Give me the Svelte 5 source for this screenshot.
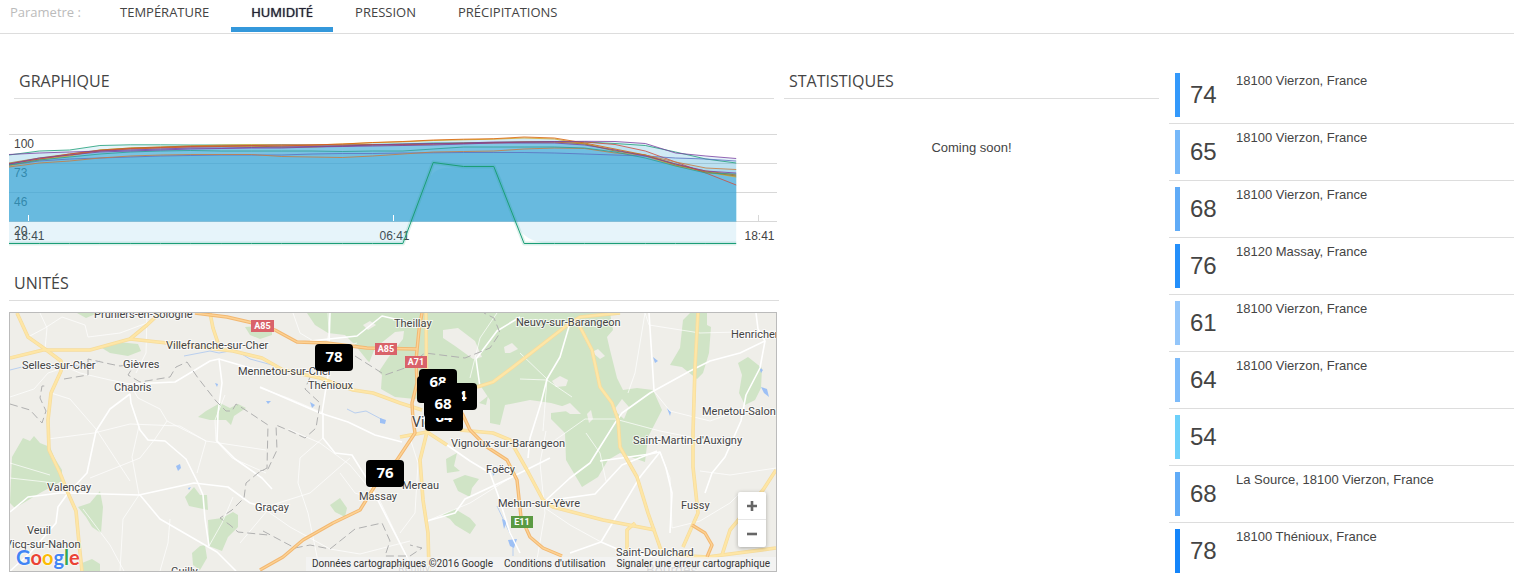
<script lang="ts">
	const tabs = ['Température', 'Humidité', 'Pression', 'Précipitations'];
	let active = $state('Humidité');

	const units = [
		{ value: 74, address: '18100 Vierzon, France', color: '#3399fb' },
		{ value: 65, address: '18100 Vierzon, France', color: '#76b8f9' },
		{ value: 68, address: '18100 Vierzon, France', color: '#60abf7' },
		{ value: 76, address: '18120 Massay, France', color: '#248ffa' },
		{ value: 61, address: '18100 Vierzon, France', color: '#94c6fa' },
		{ value: 64, address: '18100 Vierzon, France', color: '#7dbbfa' },
		{ value: 54, address: '', color: '#6dd0fa' },
		{ value: 68, address: 'La Source, 18100 Vierzon, France', color: '#60abf7' },
		{ value: 78, address: '18100 Thénioux, France', color: '#1485fa' }
	];

	// Chart: one value per hour, 25 points
	const STEP = 30.3;
	const BASE = 91.5;
	const gridLines = [
		{ y: 4.5, label: '100' },
		{ y: 33.5, label: '73' },
		{ y: 62.5, label: '46' },
		{ y: 91.5, label: '20' }
	];
	const ticks = [
		{ x: 19.5, label: '18:41', stroke: '#fff' },
		{ x: 384.5, label: '06:41', stroke: '#fff' },
		{ x: 749.5, label: '18:41', stroke: '#d8d8d8' }
	];
	const series = [
		{ color: '#1b9e77', ys: [25, 21, 20, 15.5, 14.8, 14.8, 15, 15, 15, 14.8, 15, 15, 14.5, 14, 13, 13, 12.5, 12, 11.5, 12, 13.5, 15.5, 22, 29, 33] },
		{ color: '#d9a521', ys: [36, 30, 26, 20, 18, 17, 16, 15, 14.6, 15, 15, 14, 12.7, 11.8, 10.5, 9.8, 9.2, 8, 9, 14, 20, 26, 36, 42, 47] },
		{ color: '#d95f02', ys: [34, 29, 25, 21, 19, 18, 17, 16.5, 16, 16, 15, 14, 12.5, 11.5, 10, 9.2, 8.7, 7, 8, 13, 19, 25, 35, 41, 45] },
		{ color: '#a6761d', ys: [33, 28, 24, 20, 18, 17, 16, 16, 16, 17, 17, 16, 15, 15, 14, 13, 12.5, 12, 12, 14, 21, 25, 34, 42, 46] },
		{ color: '#d14a3a', ys: [34, 29, 24, 20.5, 18.5, 17.5, 16.5, 16, 15.5, 15, 15, 15, 14.5, 14.5, 14, 13.5, 13, 12, 12, 12, 14.5, 21, 32, 43, 55] },
		{ color: '#7b3fa0', ys: [24.5, 23, 22, 21, 20, 19, 18, 18, 17.5, 17, 16.5, 16, 15, 14, 13.5, 13, 12, 12, 11.5, 11.3, 11.5, 13.5, 23, 26, 28.5] },
		{ color: '#5b6fc0', ys: [35, 31, 29, 28, 27, 26, 25.5, 25, 25, 25, 24, 23.5, 23.5, 23, 22.8, 22.5, 22.5, 22.5, 23, 24, 25, 26, 28, 29, 31] },
		{ color: '#cc7a3a', ys: [37, 33, 31, 28, 26, 25, 24.5, 24.5, 24.5, 26.5, 27, 27.5, 26, 24, 22, 21.5, 21, 19, 18, 18.5, 23, 25, 32, 38, 39.5] },
		{ color: '#2a9d92', ys: [35, 30, 27, 24, 22, 21, 20.5, 21, 21, 21, 21, 21.5, 21, 21, 19, 17, 17, 17, 17, 18, 22, 28, 36, 43, 44] },
		{ color: '#7b3fa0', ys: [34, 28, 25, 22, 21, 20, 19, 18.5, 18, 18, 17, 16.5, 16, 15.5, 15, 14, 13, 13, 13, 15, 20, 26, 34, 41, 43] }
	];
	const isolated = { color: '#1b9e77', ys: Array.from({ length: 25 }, (_, i) => (i === 14 ? 32.5 : i === 15 || i === 16 ? 36.5 : 113.5)) };

	function line(ys: number[]) {
		return ys.map((y, i) => `${i ? 'L' : 'M'}${(i * STEP).toFixed(1)} ${y}`).join('');
	}

	function area(ys: number[]) {
		return `${line(ys)}V${BASE}H0Z`;
	}

	// Map layers
	const forests = [
		'M92 35L108 29 128 31 131 38 118 43 100 40Z',
		'M2 144L13 125 20 128 24 123 30 130 40 134 44 144 52 157 52 168 30 180 5 195 0 190Z',
		'M68 194L80 190 90 178 93 194 91 220 82 214 76 204Z',
		'M188 104L196 98 210 90 220 95 228 91 236 95 224 103 221 112 216 107 200 107Z',
		'M175 184L184 174 190 182 197 182 198 197 179 193Z',
		'M198 207L212 205 223 199 228 202 228 214 218 224 212 238 199 233Z',
		'M182 240L190 233 195 232 197 245 190 257 183 252Z',
		'M72 250L82 246 90 251 90 258 73 258Z',
		'M67 0L88 0 76 5Z',
		'M235 14L262 12 262 22 250 26 240 22Z',
		'M297 0L305 12 318 20 335 22 345 32 357 47 372 62 371 76 385 84 405 86 440 76 470 72 480 87 480 110 490 112 495 92 520 87 541 90 566 97 541 100 541 106 555 120 556 147 572 174 588 164 598 147 610 140 635 149 638 124 652 97 643 77 627 75 613 77 607 65 600 37 597 24 603 17 600 0Z',
		'M673 7L680 0 697 0 697 12 701 14 699 40 693 60 687 66 672 54 660 52 670 35Z',
		'M728 50L738 44 752 55 751 75 745 87 735 92 729 80 732 62Z',
		'M436 146L447 140 444 153 450 158 437 160Z',
		'M443 167L455 162 469 166 462 175 460 184 448 178Z',
		'M432 202L445 196 460 205 466 212 460 221 445 212 440 206Z',
		'M320 192L330 185 337 195 335 204 325 199Z',
		'M469 90L478 83 476 92Z'
	];
	const clearings = [
		'M433 17L448 15 465 28 472 44 463 46 445 33 433 25Z',
		'M494 34L502 30 508 36 500 40 495 40Z',
		'M355 60L365 35 385 19 394 18 393 26 378 45 368 60Z',
		'M353 12L360 8 366 12 358 17Z',
		'M542 68L550 63 558 67 556 73 546 74Z',
		'M550 94L560 90 571 101 560 101Z',
		'M582 39L588 36 595 43 590 46Z',
		'M604 97L612 86 619 94 614 106Z',
		'M577 101L581 97 583 106 579 110Z'
	];
	const minorRoads = [
		'M0 84L24 76 38 60 56 54 70 60 100 67 120 71',
		'M18 24L35 15 52 4',
		'M35 36L37 15 30 0',
		'M41 80L60 86 86 116 120 168',
		'M38 126L84 120 120 111 170 113 196 128 256 137',
		'M0 150L40 162',
		'M0 165L45 170',
		'M73 196L100 232 114 258',
		'M129 182L113 206 110 258',
		'M129 113L122 144 129 182',
		'M120 71L128 85 150 96 157 108 196 128 187 160',
		'M157 108L145 126 130 145 80 165',
		'M223 184L212 210 199 233',
		'M160 206L158 230 150 258',
		'M215 82L205 107 206 128 222 145 256 160',
		'M52 4L75 12 78 24 110 20 137 10',
		'M137 0L136 40 126 60',
		'M278 116L310 130 340 152 370 188 395 240',
		'M250 75L278 85 313 100',
		'M313 125L290 145 288 170 298 200 310 258',
		'M340 145L300 180 262 192 230 230',
		'M370 188L345 180 330 160',
		'M250 193L280 214 320 236 350 241 400 228',
		'M318 0L319 20 310 60 312 75',
		'M347 30L320 38 290 20 283 0',
		'M400 125L408 150 405 200 390 220',
		'M417 208L460 190 500 165',
		'M487 0L470 25 460 65',
		'M510 40L537 66 533 118',
		'M562 84L537 67 510 66',
		'M541 130L575 106 605 106',
		'M605 106L650 118 690 126',
		'M639 12L635 0 625 60 618 80',
		'M639 12L690 20 766 18',
		'M643 77L660 98 700 108 725 99',
		'M690 158L720 162 766 155',
		'M650 139L660 165 662 215',
		'M576 120L590 140 596 168',
		'M591 229L560 212 535 195',
		'M662 215L690 208 720 190 730 180',
		'M525 258L535 200 530 150 536 118'
	];
	const localRoads = [
		'M0 199L18 184 50 180 58 180 48 194 46 210 20 240 0 258',
		'M58 180L130 182 150 206 207 239 226 258',
		'M58 180L77 160 86 118 100 96 120 81 121 90 130 117 138 127 155 128 176 146 187 168 193 182 195 206 199 233',
		'M129 182L184 170 218 174 240 190 262 196',
		'M120 71L165 69 200 48 209 46 212 70 208 100 207 128 225 146 252 165 262 176',
		'M209 46L240 55 262 58',
		'M250 74L273 84 310 100 338 109 365 122 392 129',
		'M313 100L313 125 325 140 342 142 357 166 400 250',
		'M312 100L318 62 320 0',
		'M300 28L347 23 372 3 398 9',
		'M437 132L460 148 480 160 488 182 500 220 510 240',
		'M417 208L445 200 455 186 500 165 540 145',
		'M560 10L550 44 537 66 531 90 520 125 518 145',
		'M535 188L560 165 580 150 605 110 612 100 640 80 680 58 700 48 730 40 755 28 748 16 746 0',
		'M639 0L644 77',
		'M755 28L750 55 736 82 731 108 715 144 702 160 695 180',
		'M590 148L640 141 650 139 656 155 662 180 660 220',
		'M650 139L630 164 591 229 560 240',
		'M535 188L585 181 612 152 647 138',
		'M591 229L612 238 650 245',
		'M470 74L466 46 487 18 510 4'
	];
	const yellowRoads = [
		'M7 0L18 24 35 36 51 48 51 58 41 80 38 107 39 137 50 160 58 180 66 198 69 230 72 258',
		'M0 45L33 37 80 37 120 26 157 30 223 38 252 45 273 57 310 65 343 77 363 80 390 90 412 97',
		'M120 26L137 12 150 0',
		'M200 0L203 15 208 30',
		'M416 0L417 119 410 147 413 187 418 220 419 258',
		'M390 124L417 119 437 132',
		'M467 74L483 69 503 54 560 10 570 4 610 0',
		'M567 8L582 37 590 74 602 90 608 107 610 134 627 164 638 200 652 240',
		'M688 0L685 54 683 120 683 154 688 200 673 234',
		'M450 117L483 120 500 127 517 157 533 187 543 194 593 207 645 217',
		'M617 238L617 217 625 210',
		'M766 157L753 177 720 217 712 242',
		'M665 242L697 244 766 235'
	];
	const motorways = [
		'M185 0L217 4 243 10 265 17 287 29 317 30 357 35 407 36',
		'M412 0L409 17 406 47 407 70 402 90 403 107 405 120 387 147 373 160 350 197 323 210 293 227 273 244 250 257',
		'M452 100L460 117 477 134 497 147 507 167 511 204 520 224 533 235 552 243',
		'M682 212L695 220 702 232 697 244'
	];
	const boundaries = [
		'M0 91L20 97 32 110 36 98 30 85 32 73 38 73',
		'M54 66L78 62 78 46 100 51 110 53 125 51 118 62 130 69 160 64 166 54 177 49 188 65 206 88 216 98 222 98 226 91 240 100 258 112 257 155 248 160 236 170 234 185 222 197 210 205 220 212 228 219 258 222',
		'M345 43L375 62 395 55 415 40 455 45 480 35 490 20 484 5 474 0',
		'M300 64L295 76 310 90 306 115 295 125 280 118 266 112 267 137 258 156 250 158',
		'M253 218L285 235 300 232 320 236 345 216 372 210 380 228 375 243 400 243 412 235 400 232'
	];
	const rivers = [
		'M0 57L20 52 45 54 78 52 90 48',
		'M174 43L200 38 209 40 225 37 240 46 262 52',
		'M337 96L345 100 356 98 373 107',
		'M487 193L495 210 503 227 503 243'
	];
	const lakes = [
		'M166 153L170 151 171 155 168 158Z', 'M205 70L208 71 207 74Z', 'M178 175L181 174 179 177Z',
		'M300 89L305 92 302 95Z', 'M370 105L376 107 375 111 370 110Z', 'M256 88L261 88 258 91Z',
		'M643 44L648 48 645 50Z', 'M751 74L757 76 759 84 754 80Z', 'M749 54L753 57 751 60Z',
		'M657 95L661 99 660 103Z', 'M498 227L507 226 504 235 500 233Z', 'M492 206L497 208 494 216Z', 'M482 156L486 159 483 163Z'
	];
	const towns = [
		{ x: 84, y: 5, name: 'Pruniers-en-Sologne' },
		{ x: 156, y: 36, name: 'Villefranche-sur-Cher' },
		{ x: 12, y: 56, name: 'Selles-sur-Cher' },
		{ x: 113, y: 55, name: 'Gièvres' },
		{ x: 104, y: 78, name: 'Chabris' },
		{ x: 228, y: 62, name: 'Mennetou-sur-Cher' },
		{ x: 298, y: 76, name: 'Thénioux' },
		{ x: 384, y: 14, name: 'Theillay' },
		{ x: 506, y: 13, name: 'Neuvy-sur-Barangeon' },
		{ x: 721, y: 25, name: 'Henrichemont' },
		{ x: 692, y: 102, name: 'Menetou-Salon' },
		{ x: 623, y: 131, name: "Saint-Martin-d'Auxigny" },
		{ x: 441, y: 134, name: 'Vignoux-sur-Barangeon' },
		{ x: 476, y: 160, name: 'Foëcy' },
		{ x: 392, y: 176, name: 'Mereau' },
		{ x: 349, y: 187, name: 'Massay' },
		{ x: 245, y: 198, name: 'Graçay' },
		{ x: 37, y: 178, name: 'Valençay' },
		{ x: 17, y: 221, name: 'Veuil' },
		{ x: -5, y: 235, name: 'Vicq-sur-Nahon' },
		{ x: 161, y: 262, name: 'Guilly' },
		{ x: 488, y: 194, name: 'Mehun-sur-Yèvre' },
		{ x: 671, y: 196, name: 'Fussy' },
		{ x: 606, y: 243, name: 'Saint-Doulchard' }
	];
	const shields = [
		{ x: 241, y: 7, w: 23, label: 'A85', fill: '#d9626a' },
		{ x: 365, y: 30, w: 22, label: 'A85', fill: '#d9626a' },
		{ x: 395, y: 43, w: 22, label: 'A71', fill: '#d9626a' },
		{ x: 501, y: 203, w: 22, label: 'E11', fill: '#5b9a43' }
	];
	const pins = [
		{ x: 305, y: 31, value: 78 },
		{ x: 356, y: 147, value: 76 },
		{ x: 407, y: 63, value: 65 },
		{ x: 409, y: 56, value: 68 },
		{ x: 429, y: 70, value: 74 },
		{ x: 415, y: 91, value: 64 },
		{ x: 414, y: 78, value: 68 }
	];
</script>

<nav class="params">
	<span class="params-label">Parametre :</span>
	{#each tabs as tab}
		<button class="tab" class:active={tab === active} onclick={() => (active = tab)}>{tab}</button>
	{/each}
</nav>

<main class="dashboard">
	<div class="left">
		<section>
			<h2 class="title inset">Graphique</h2>
			<svg class="chart" viewBox="0 0 768 118" role="img" aria-label="Graphique humidité">
				{#each gridLines as g}
					<line x1="0" x2="768" y1={g.y} y2={g.y} stroke="#d8d8d8" />
					<text x="5" y={g.y + 13}>{g.label}</text>
				{/each}
				{#each ticks as t}
					<text x={t.x + 1} y="110" text-anchor="middle">{t.label}</text>
				{/each}
				<g fill="#2ea5d6" fill-opacity="0.12">
					{#each series as s}
						<path d={area(s.ys)} />
					{/each}
					<path d="M0 91.5H401L418 52Q424 39 436 38L480 36Q488 39 492 48L505 91.5H727.2V113.5H540Q524 113 514 104 509 99 505 91.5H401L393.9 113.5H0Z" />
				</g>
				<g fill="none" stroke-linejoin="round">
					{#each series as s}
						<path d={line(s.ys)} stroke={s.color} stroke-opacity="0.8" />
					{/each}
					<path d={line(isolated.ys)} stroke="#1b9e77" stroke-opacity="0.15" stroke-width="4" />
					<path d={line(isolated.ys)} stroke={isolated.color} />
				</g>
				{#each ticks as t}
					<line x1={t.x} x2={t.x} y1="85" y2="91" stroke={t.stroke} />
				{/each}
			</svg>
		</section>

		<section>
			<h2 class="title units-title">Unités</h2>
			<div class="map">
				<svg class="map-canvas" viewBox="0 0 766 258" preserveAspectRatio="xMidYMid slice">
					<rect width="766" height="258" fill="#efeee9" />
					<g fill="#d0e4c6">
						{#each forests as d}<path {d} />{/each}
					</g>
					<g fill="#efeee9">
						{#each clearings as d}<path {d} />{/each}
					</g>
					<g fill="none" stroke="#b9cfef">
						{#each rivers as d}<path {d} />{/each}
					</g>
					<g fill="#9dc0f5">
						{#each lakes as d}<path {d} />{/each}
					</g>
					<g fill="none" stroke="#fff" stroke-linejoin="round">
						<g stroke-opacity="0.7">
							{#each minorRoads as d}<path {d} />{/each}
						</g>
						<g stroke-width="1.6">
							{#each localRoads as d}<path {d} />{/each}
						</g>
					</g>
					<g fill="none" stroke="#b0b0b0" stroke-dasharray="8 4">
						{#each boundaries as d}<path {d} />{/each}
					</g>
					<g fill="none" stroke-linejoin="round">
						{#each yellowRoads as d}<path {d} stroke="#f6dc9c" stroke-width="3.6" />{/each}
						{#each yellowRoads as d}<path {d} stroke="#fee6a6" stroke-width="2.2" />{/each}
						{#each motorways as d}<path {d} stroke="#f2b872" stroke-width="3.4" />{/each}
						{#each motorways as d}<path {d} stroke="#fdd294" stroke-width="1.4" />{/each}
					</g>
					{#each shields as s}
						<rect x={s.x} y={s.y} width={s.w} height="12" fill={s.fill} />
						<text class="shield" x={s.x + s.w / 2} y={s.y + 9} text-anchor="middle">{s.label}</text>
					{/each}
					{#each towns as t}
						<text class="town" x={t.x} y={t.y}>{t.name}</text>
					{/each}
					<text class="town city" x="402" y="114">Vierzon</text>
					<text class="town faded" x="388" y="259">Reuilly</text>
					<text class="town city faded" x="636" y="262">Bourges</text>
					{#each pins as p}
						<g class="pin">
							<rect x={p.x} y={p.y} width="38" height="27" rx="4" />
							<text x={p.x + 19} y={p.y + 18} text-anchor="middle">{p.value}</text>
						</g>
					{/each}
				</svg>
				<a class="logo" href="#google" aria-label="Google">
					<span class="b">G</span><span class="r">o</span><span class="y">o</span><span class="b">g</span><span class="g">l</span><span class="r">e</span>
				</a>
				<div class="zoom">
					<button aria-label="Zoom avant">
						<svg viewBox="0 0 10 10"><path d="M0 5H10M5 0V10" /></svg>
					</button>
					<button aria-label="Zoom arrière">
						<svg viewBox="0 0 10 10"><path d="M0 5H10" /></svg>
					</button>
				</div>
				<div class="credits">
					<span>Données cartographiques ©2016 Google</span>
					<a href="#conditions">Conditions d'utilisation</a>
					<a href="#erreur">Signaler une erreur cartographique</a>
				</div>
			</div>
		</section>
	</div>

	<section class="stats">
		<h2 class="title">Statistiques</h2>
		<p class="soon">Coming soon!</p>
	</section>

	<ul class="unit-list">
		{#each units as unit}
			<li class="unit">
				<span class="bar" style="background: {unit.color}"></span>
				<span class="value">{unit.value}</span>
				<span class="address">{unit.address}</span>
			</li>
		{/each}
	</ul>
</main>

<style>
	:global(body) {
		margin: 0;
		background: #fff;
		color: #444;
		font-family: 'Liberation Sans', Arial, sans-serif;
		font-size: 13px;
	}

	.params {
		display: flex;
		align-items: stretch;
		gap: 2px;
		padding: 0 10px 1px;
		border-bottom: 1px solid #ddd;
		font-family: 'Open Sans', sans-serif;
		font-size: 13px;
		line-height: 24px;
	}

	.params-label {
		width: 88px;
		color: #bbb;
	}

	.tab {
		padding: 0 20px 3px;
		border: none;
		border-bottom: 5px solid transparent;
		background: none;
		color: #444;
		font: inherit;
		text-transform: uppercase;
		cursor: pointer;
	}

	.tab.active {
		border-bottom-color: #3498db;
		color: #223;
		text-shadow: 0 0 1px #223;
	}

	.dashboard {
		display: grid;
		grid-template-columns: 784fr 385fr 345fr;
	}

	.left {
		padding: 35px 5px 0 9px;
	}

	.title {
		margin: 0;
		padding: 0 5px 5px;
		border-bottom: 1px solid #ddd;
		font-family: 'Open Sans', sans-serif;
		font-size: 16px;
		font-weight: 400;
		line-height: 24px;
		text-transform: uppercase;
	}

	.inset {
		margin: 0 5px;
	}

	.units-title {
		margin-top: 23px;
	}

	/* Chart */
	.chart {
		display: block;
		width: calc(100% - 2px);
		margin-top: 31px;
	}

	.chart text {
		fill: #444;
		font-size: 12px;
	}

	/* Map */
	.map {
		position: relative;
		margin: 11px 2px 0 0;
		border: 1px solid #bbb;
		overflow: hidden;
	}

	.map-canvas {
		display: block;
		width: 100%;
	}

	.town {
		fill: #444;
		stroke: #fff;
		stroke-opacity: 0.7;
		stroke-width: 2px;
		paint-order: stroke;
		font-family: Roboto, sans-serif;
		font-size: 11px;
	}

	.city {
		font-size: 14px;
	}

	.faded {
		fill: #999;
	}

	.shield {
		fill: #fff;
		font-family: Roboto, sans-serif;
		font-size: 9px;
		font-weight: 700;
	}

	.pin text {
		fill: #fff;
		font-family: 'Open Sans', sans-serif;
		font-size: 15px;
		font-weight: 700;
	}

	.logo {
		position: absolute;
		left: 6px;
		bottom: 1px;
		display: flex;
		font-family: Lato, sans-serif;
		font-size: 20px;
		font-weight: 700;
		line-height: 26px;
		text-decoration: none;
		text-shadow: 0 0 2px #fff, 0 0 2px #fff;
	}

	.b { color: #4285f4; }
	.r { color: #ea4335; }
	.y { color: #fbbc05; }
	.g { color: #34a853; }

	.zoom {
		position: absolute;
		right: 10px;
		bottom: 24px;
		width: 28px;
		border-radius: 2px;
		background: #fff;
		box-shadow: 0 1px 4px rgba(0, 0, 0, 0.3);
	}

	.zoom button {
		display: flex;
		align-items: center;
		justify-content: center;
		width: 28px;
		height: 27px;
		padding: 0;
		border: none;
		background: none;
		cursor: pointer;
	}

	.zoom button + button {
		height: 28px;
		border-top: 1px solid #e6e6e6;
	}

	.zoom svg {
		width: 10px;
		height: 10px;
		stroke: #666;
		stroke-width: 2.6;
	}

	.credits {
		position: absolute;
		right: 0;
		bottom: 0;
		display: flex;
		gap: 11px;
		padding: 0 6px;
		background: rgba(245, 245, 245, 0.7);
		color: #333;
		font-family: Roboto, sans-serif;
		font-size: 10px;
		line-height: 14px;
		white-space: nowrap;
	}

	.credits a {
		color: inherit;
		text-decoration: none;
	}

	/* Statistics */
	.stats {
		padding: 35px 10px 0 0;
	}

	.soon {
		margin: 41px 0 0;
		line-height: 16px;
		text-align: center;
	}

	/* Unit list */
	.unit-list {
		margin: 0;
		padding: 33px 0 0;
		list-style: none;
	}

	.unit {
		display: flex;
		align-items: center;
		padding: 6px;
		border-bottom: 1px solid #ddd;
	}

	.unit:last-child {
		border-bottom: none;
	}

	.bar {
		width: 5px;
		height: 44px;
	}

	.value {
		width: 46px;
		padding-left: 10px;
		font-size: 24px;
	}

	.address {
		align-self: flex-start;
		line-height: 16px;
	}
</style>
